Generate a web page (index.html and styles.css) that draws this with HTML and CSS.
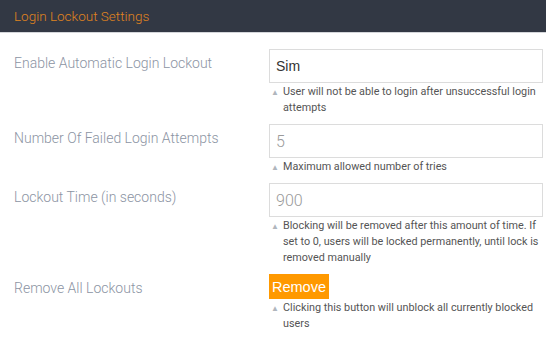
FILE: index.html
```html
<!DOCTYPE html>
<html lang="en">
<head>
  <meta charset="UTF-8">
  <title>Login Lockout Settings</title>
  <meta name="viewport" content="width=device-width, initial-scale=1">
  <link rel="stylesheet" href="styles.css">
</head>
<body>

  <div class="panel-head">
    <h3>Login Lockout Settings</h3>
  </div>

  <form class="settings">
    <div class="row">
      <label class="field-label">Enable Automatic Login Lockout</label>
      <div class="field">
        <div class="input select-like">Sim</div>
        <p class="help"><span class="tri">&#9650;</span>User will not be able to login after unsuccessful login attempts</p>
      </div>
    </div>

    <div class="row">
      <label class="field-label">Number Of Failed Login Attempts</label>
      <div class="field">
        <div class="input">5</div>
        <p class="help"><span class="tri">&#9650;</span>Maximum allowed number of tries</p>
      </div>
    </div>

    <div class="row">
      <label class="field-label">Lockout Time (in seconds)</label>
      <div class="field">
        <div class="input">900</div>
        <p class="help"><span class="tri">&#9650;</span>Blocking will be removed after this amount of time. If set to 0, users will be locked permanently, until lock is removed manually</p>
      </div>
    </div>

    <div class="row">
      <label class="field-label">Remove All Lockouts</label>
      <div class="field">
        <button type="button" class="btn-remove">Remove</button>
        <p class="help"><span class="tri">&#9650;</span>Clicking this button will unblock all currently blocked users</p>
      </div>
    </div>
  </form>

</body>
</html>
```

FILE: styles.css
```css
body { margin: 0; background: #fff; font-family: Roboto, "Liberation Sans", sans-serif; }

/* header */
.panel-head {
  background: #323844; height: 32px; border-bottom: 1px solid #d4d6da;
  display: flex; align-items: center; padding: 0 14px;
}
.panel-head h3 { margin: 0; font-size: 13.5px; font-weight: 300; color: #e0841e; }

/* form rows */
.settings { padding: 16px 3px 0 14px; }
.row { display: flex; margin-bottom: 8px; }
.field-label {
  width: 255px; flex: none; font-size: 14px; font-weight: 300; color: #8c94a3;
  padding-top: 6px;
}
.field { flex: 1; }

.input {
  height: 32px; border: 1px solid #dcdcdc; box-sizing: content-box;
  padding: 0 6px; display: flex; align-items: center;
  font-size: 16px; font-weight: 300; color: #9a9a9a;
}
.input.select-like { font-family: "Liberation Sans", Arial, sans-serif; font-size: 14px; font-weight: 400; color: #333; }

.help {
  margin: 1px 0 0; padding-left: 14px; position: relative;
  font-size: 10.8px; line-height: 16px; color: #555;
}
.help .tri { position: absolute; left: 2px; top: 1px; font-size: 8px; color: #b0b6bd; }

.btn-remove {
  background: #ff9900; color: #fff; border: none; height: 25px; width: 60px;
  font-family: "Liberation Sans", Arial, sans-serif; font-size: 14.5px; padding: 0; margin-top: 0;
}
```
